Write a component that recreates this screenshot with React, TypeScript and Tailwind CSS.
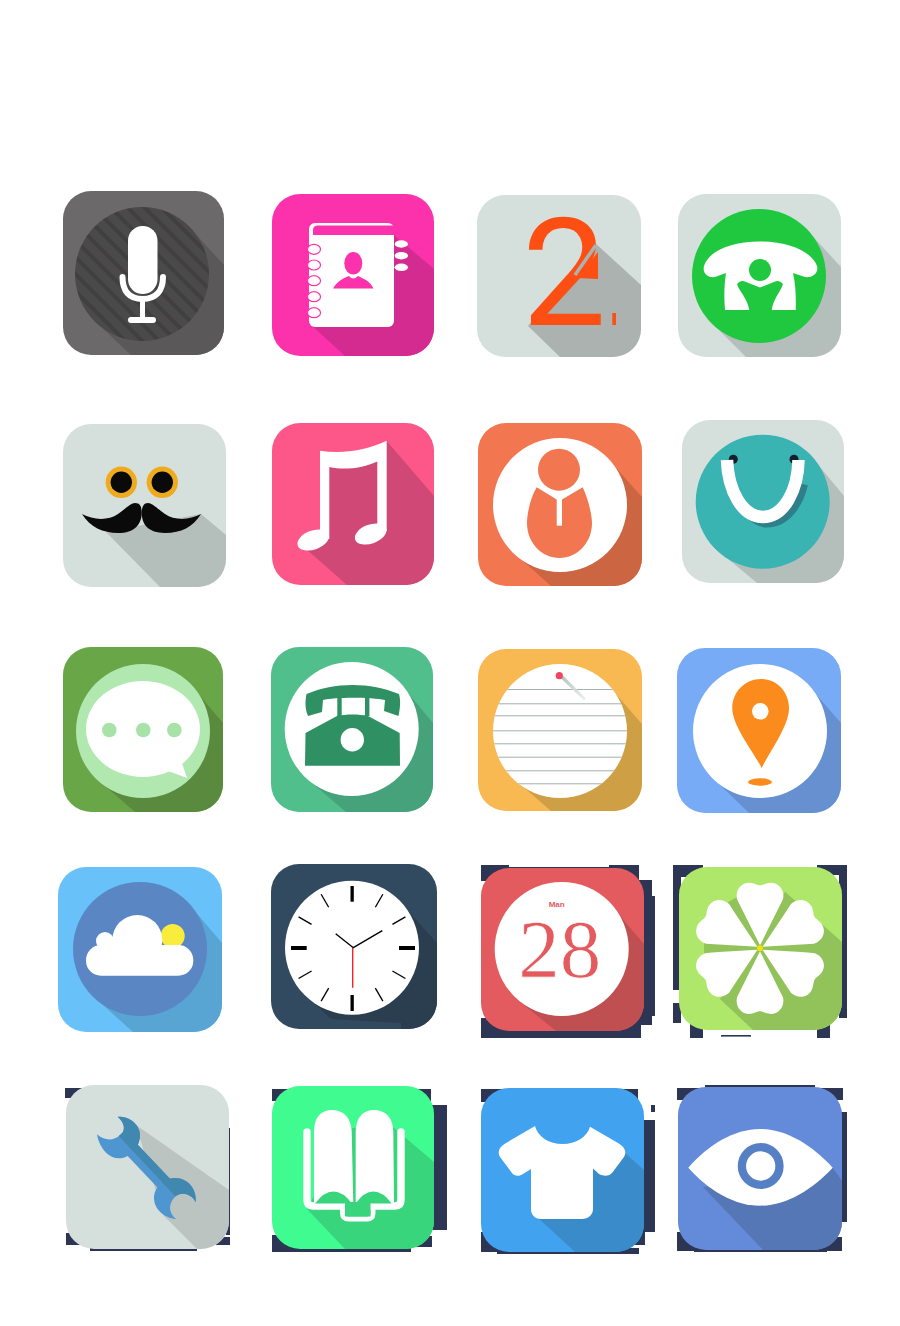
import React from "react";

const NAVY = "#2c3554";
const CHALK = "#d5e0dc";

type Box = [number, number, number, number];

function Tile({
  id,
  w,
  h,
  bg,
  className,
  junk = [],
  children,
}: {
  id: string;
  w: number;
  h: number;
  bg: string;
  className: string;
  junk?: Box[];
  children: React.ReactNode;
}) {
  return (
    <svg viewBox={`0 0 ${w} ${h}`} className={`overflow-visible ${className}`}>
      <defs>
        <clipPath id={id}>
          <rect width={w} height={h} rx={28} />
        </clipPath>
      </defs>
      {/* leftover dark cut-out marks behind some of the tiles */}
      {junk.map(([x, y, bw, bh], i) => (
        <rect key={i} x={x} y={y} width={bw} height={bh} fill={NAVY} />
      ))}
      <g clipPath={`url(#${id})`}>
        <rect width={w} height={h} fill={bg} />
        {children}
      </g>
    </svg>
  );
}

function Mic() {
  return (
    <Tile id="mic" w={161} h={164} bg="#6b6969" className="ml-[5px] w-[161px] h-[164px]">
      <defs>
        <pattern id="micStripes" width="12" height="12" patternUnits="userSpaceOnUse" patternTransform="rotate(45)">
          <rect width="12" height="12" fill="#4b4a4a" />
          <rect width="12" height="4" fill="#413f3f" />
        </pattern>
      </defs>
      <polygon points="126,36 161,74 161,164 68,164 32,130" fill="#5a5858" />
      <circle cx="79" cy="83" r="67" fill="url(#micStripes)" />
      <rect x="65" y="35" width="29.5" height="68" rx="14.7" fill="#fff" />
      <path d="M59.5 86C59.5 100 66 108 79.5 108C93 108 100 100 100 86" fill="none" stroke="#fff" strokeWidth="6" strokeLinecap="round" />
      <path d="M79.5 108V127" stroke="#fff" strokeWidth="5" />
      <rect x="65" y="126" width="28" height="6" rx="3" fill="#fff" />
    </Tile>
  );
}

function Contacts() {
  return (
    <Tile id="contacts" w={162} h={162} bg="#fb32ac" className="ml-px mt-[3px] w-[162px] h-[162px]">
      <polygon points="122,41 162,75 162,162 73,162 37,129" fill="#d42b91" />
      <rect x="37" y="29" width="85" height="104" rx="6" fill="#fff" />
      <path d="M41 41V36Q41 31.5 46 31.5H123V41Z" fill="#fb32ac" />
      {[55.3, 71, 86.7, 102.7, 118.7].map((y) => (
        <ellipse key={y} cx="42" cy={y} rx="6.5" ry="5" fill="#fff" stroke="#fb32ac" strokeWidth="1.2" />
      ))}
      {[50, 61.7, 73.3].map((y) => (
        <ellipse key={y} cx="129.3" cy={y} rx="6.7" ry="3.7" fill="#fff" />
      ))}
      <ellipse cx="81.3" cy="69.3" rx="9" ry="11.3" fill="#fb32ac" />
      <path d="M61 94.5C65 87 72 84 77 82Q81 87 86 82C92 85 98 87 101.5 94.5Z" fill="#fb32ac" />
    </Tile>
  );
}

function Two() {
  return (
    <Tile id="two" w={164} h={162} bg={CHALK} className="mt-[4px] w-[164px] h-[162px]">
      <polygon points="118,48 164,90 164,162 83,162 51,131 114,50" fill="#abb2b0" />
      <text x="45" y="130" fontSize="150" fill="#fd4f14" className="font-['Roboto',sans-serif]">
        2
      </text>
      <polygon points="121,57 121,84 100,83" fill="#fd4f14" />
      <path d="M119 50L98 80" stroke="#abb2b0" strokeWidth="3.5" />
      <rect x="135.3" y="118" width="3.7" height="12" fill="#fd4f14" />
    </Tile>
  );
}

function GreenPhone() {
  return (
    <Tile id="greenPhone" w={163} h={163} bg={CHALK} className="ml-px mt-[3px] w-[163px] h-[163px]">
      <polygon points="128,35 163,73 163,163 68,163 34,129" fill="#b4bebb" />
      <circle cx="81" cy="82" r="67" fill="#1fc83f" />
      <path
        d="M26 72C30 58 52 47.5 82 47.5C112 47.5 134 58 139 72C141 80 133 84 127 83L115 79C118 92 118 105 117.7 116L47 116C46 105 46 92 48 79L37 83C31 84 24 80 26 72Z"
        fill="#fff"
      />
      <circle cx="82" cy="76" r="11" fill="#1fc83f" />
      <path
        d="M59 90Q63 85 68 88L82 93.5L96 88Q101 85 105 90C103 97 95 105 93.7 116.5L71.3 116.5C70 105 61 97 59 90Z"
        fill="#1fc83f"
      />
    </Tile>
  );
}

function Mustache() {
  return (
    <Tile id="mustache" w={163} h={163} bg={CHALK} className="ml-[5px] mt-[4px] w-[163px] h-[163px]">
      <polygon points="138,90 163,111 163,163 97,163 43,108" fill="#b4bebb" />
      {[58.3, 99.3].map((x) => (
        <g key={x}>
          <circle cx={x} cy="58.3" r="15.7" fill="#eeab1e" />
          <circle cx={x} cy="58.3" r="10.7" fill="#0a0a0a" />
        </g>
      ))}
      <path d="M19 90C30 96 45 97 55 90C62 85 68 79 72 79C78 79 78.5 84 78.7 88C79 100 72 109 55 109C40 109 27 103 19 90Z" fill="#0a0a0a" />
      <path d="M138 90C127 96 112 97 102 90C95 85 89 79 85 79C80 79 79 84 78.7 88C78.5 100 85 109 102 109C118 109 130 103 138 90Z" fill="#0a0a0a" />
    </Tile>
  );
}

function Music() {
  return (
    <Tile id="music" w={162} h={162} bg="#fd5789" className="ml-px mt-[3px] w-[162px] h-[162px]">
      <polygon points="52,40 100,30 114.7,18 162,73 162,162 75,162 33,125 52,112" fill="#d04875" />
      <path d="M48 27.7C70 31 92 28 114.7 17.7V108H105.3V38.5C88 46 72 47 57.3 44V116H48Z" fill="#fff" />
      <ellipse cx="41.3" cy="117" rx="16.5" ry="9.5" transform="rotate(-20 41.3 117)" fill="#fff" />
      <ellipse cx="98.7" cy="111" rx="16.5" ry="9.5" transform="rotate(-20 98.7 111)" fill="#fff" />
    </Tile>
  );
}

function Baby() {
  return (
    <Tile id="baby" w={164} h={163} bg="#f27650" className="ml-px mt-[3px] w-[164px] h-[163px]">
      <polygon points="129,35 164,74 164,163 73,163 35,129" fill="#cc6541" />
      <circle cx="82" cy="82" r="67" fill="#fff" />
      <circle cx="81" cy="46.7" r="21" fill="#f27650" />
      <path
        d="M58.7 64.3C52 75 49 92 49 100C49 120 64 135 81.5 135C99 135 114 120 114 100C114 92 110 75 104.7 64.3L84 76.5H78.7Z"
        fill="#f27650"
      />
      <rect x="78.7" y="75" width="5.3" height="27.7" fill="#fff" />
    </Tile>
  );
}

function Bag() {
  return (
    <Tile id="bag" w={162} h={163} bg={CHALK} className="ml-[5px] w-[162px] h-[163px]">
      <polygon points="128,35 162,76 162,163 75,163 33,128" fill="#b4bebb" />
      <circle cx="80.7" cy="81.7" r="67" fill="#3ab3b3" />
      <path d="M68 92C73 98 79 101.5 85 101.5C104 101.5 116 82 120 64" fill="none" stroke="#2f7f8a" strokeWidth="12" />
      <circle cx="51.3" cy="39.3" r="4.5" fill="#12202c" />
      <circle cx="112" cy="39.3" r="4.5" fill="#12202c" />
      <path d="M45 40C46 70 60 97 81 97C102 97 116 70 116.5 40" fill="none" stroke="#fff" strokeWidth="12.5" />
    </Tile>
  );
}

function Message() {
  return (
    <Tile id="message" w={160} h={165} bg="#68a648" className="ml-[5px] w-[160px] h-[165px]">
      <polygon points="127,37 160,76 160,165 72,165 33,131" fill="#5a8a3e" />
      <circle cx="80" cy="84" r="67" fill="#b0e8b0" />
      <ellipse cx="80" cy="82" rx="57" ry="48" fill="#fff" />
      <path d="M105 124L124 131L119 116Z" fill="#fff" />
      {[46.3, 80.3, 111.3].map((x) => (
        <circle key={x} cx={x} cy="83" r="7.3" fill="#a9e2a9" />
      ))}
    </Tile>
  );
}

function DeskPhone() {
  const ink = "#2f9063";
  return (
    <Tile id="deskPhone" w={162} h={165} bg="#50bf8b" className="w-[162px] h-[165px]">
      <polygon points="128,35 162,76 162,165 75,165 33,129" fill="#46a27a" />
      <circle cx="80.7" cy="82" r="67" fill="#fff" />
      <path
        d="M35.5 47C50 41 65 38 81.7 38C98 38 113 41 128 47C130 54 129 62 127.5 69L113 64L114 53C100 50 63 50 52 53L51 65L37 69C34 62 34 54 35.5 47Z"
        fill={ink}
      />
      <rect x="66.3" y="50" width="4.4" height="19" fill={ink} />
      <rect x="94" y="50" width="4.4" height="19" fill={ink} />
      <path d="M34 118.7L34.5 86L66 69C75 67 88 67 97 69L128.7 86L129 118.7Z" fill={ink} />
      <circle cx="81.3" cy="92.7" r="11.7" fill="#fff" />
    </Tile>
  );
}

function Notes() {
  return (
    <Tile id="notes" w={164} h={162} bg="#f8b952" className="ml-px mt-[2px] w-[164px] h-[162px]">
      <defs>
        <clipPath id="notesDisc">
          <circle cx="82" cy="82" r="67" />
        </clipPath>
        <linearGradient id="pinShade" x1="0" y1="0" x2="1" y2="1">
          <stop offset="0" stopColor="#b4c2bd" />
          <stop offset="1" stopColor="#eef1f0" />
        </linearGradient>
      </defs>
      <polygon points="129,35 164,75 164,162 73,162 35,129" fill="#cf9f46" />
      <circle cx="82" cy="82" r="67" fill="#fff" />
      <g clipPath="url(#notesDisc)">
        {[40, 54.3, 66.3, 81.3, 94.3, 107.7, 121.3, 134.3].map((y) => (
          <rect key={y} x="10" y={y} width="144" height="1" fill="#a4b0ac" />
        ))}
      </g>
      <polygon points="82.5,29 85,26.5 108,49.5 106,51.5" fill="url(#pinShade)" />
      <circle cx="81.3" cy="26.7" r="3.6" fill="#f0455f" />
    </Tile>
  );
}

function MapPin() {
  return (
    <Tile id="mapPin" w={164} h={165} bg="#77abf5" className="mt-px w-[164px] h-[165px]">
      <polygon points="130,36 164,75 164,165 72,165 36,130" fill="#6690d0" />
      <circle cx="83" cy="83" r="67" fill="#fff" />
      <path d="M84 31C100 31 112 44 112 60C112 78 93 103 84.7 120C76 103 55.3 78 55.3 60C55.3 44 68 31 84 31Z" fill="#fb8b1c" />
      <circle cx="83.3" cy="63.3" r="8.3" fill="#fff" />
      <ellipse cx="83" cy="134" rx="12" ry="3.7" fill="#fb8b1c" />
    </Tile>
  );
}

function Weather() {
  return (
    <Tile id="weather" w={164} h={165} bg="#68c1f9" className="mt-[3px] w-[164px] h-[165px]">
      <polygon points="129,35 164,76 164,165 75,165 35,129" fill="#58a4d2" />
      <circle cx="82" cy="82" r="67" fill="#5a86c4" />
      <circle cx="114.7" cy="69" r="12" fill="#f9ec3d" />
      <circle cx="79.3" cy="73" r="25" fill="#fff" />
      <circle cx="47" cy="74" r="9" fill="#fff" />
      <rect x="28" y="78" width="107.3" height="30.7" rx="15" fill="#fff" />
    </Tile>
  );
}

function Clock() {
  const cx = 81;
  const cy = 83.7;
  return (
    <Tile id="clock" w={166} h={165} bg="#314a5f" className="w-[166px] h-[165px]">
      <polygon points="128,37 166,79 166,165 130,165 130,159 60,155 34,131" fill="#2b3e50" />
      <circle cx={cx} cy={cy} r="67" fill="#fff" />
      <rect x="79.5" y="22" width="3.3" height="15.7" fill="#000" />
      <rect x="79.5" y="131" width="3.3" height="16" fill="#000" />
      <rect x="128" y="82" width="16" height="4" fill="#000" />
      <rect x="20" y="82" width="15.7" height="4" fill="#000" />
      {[30, 60, 120, 150, 210, 240, 300, 330].map((deg) => {
        const a = (deg * Math.PI) / 180;
        return (
          <line
            key={deg}
            x1={cx + 46.7 * Math.sin(a)}
            y1={cy - 46.7 * Math.cos(a)}
            x2={cx + 61.7 * Math.sin(a)}
            y2={cy - 61.7 * Math.cos(a)}
            stroke="#000"
            strokeWidth="1.3"
          />
        );
      })}
      <path d="M111.3 66.7L82.3 83.7L64.7 69.7" fill="none" stroke="#000" strokeWidth="1.4" />
      <path d="M81.7 84V123.7" stroke="#f5222d" strokeWidth="1.4" />
    </Tile>
  );
}

function Calendar() {
  return (
    <Tile
      id="calendar"
      w={163}
      h={163}
      bg="#e35b5e"
      className="ml-[4px] mt-[4px] w-[163px] h-[163px]"
      junk={[
        [0, -1, 158, 14],
        [0, -3, 28, 3],
        [128, -3, 30, 3],
        [156, 12, 15, 145],
        [168, 28, 6, 120],
        [0, 150, 160, 20],
        [165, 150, 4, 3],
      ]}
    >
      <polygon points="128,35 163,76 163,163 75,163 33,129" fill="#c04f52" />
      <circle cx="80.7" cy="81" r="67" fill="#fff" />
      <text x="75.7" y="38.5" fontSize="8" fontWeight="700" textAnchor="middle" fill="#e35b5e" className="font-['Liberation_Sans',sans-serif]">
        Man
      </text>
      <text x="78.7" y="108.7" fontSize="83" textAnchor="middle" fill="#e35b5e" stroke="#fff" strokeWidth="0.7" className="font-['Liberation_Serif',serif]">
        28
      </text>
    </Tile>
  );
}

const PETAL =
  "M0 -3C-7.7 -18 -15.3 -34 -23 -49C-25 -58 -19 -65.6 -11 -65.6C-6 -65.6 -3 -63 0 -63C3 -63 6 -65.6 11 -65.6C19 -65.6 25 -58 23 -49C15.3 -34 7.7 -18 0 -3Z";

function Clover() {
  return (
    <Tile
      id="clover"
      w={163}
      h={163}
      bg="#afe76a"
      className="ml-[2px] mt-[3px] w-[163px] h-[163px]"
      junk={[
        [-6, -2, 30, 12],
        [-6, -2, 8, 125],
        [138, -2, 30, 10],
        [160, 4, 8, 147],
        [-6, 136, 8, 20],
        [11, 150, 13, 21],
        [138, 150, 13, 21],
        [42, 168, 30, 1.6],
      ]}
    >
      <polygon points="106,24.7 163,75 163,163 74,163 41,132" fill="#92c25a" />
      <circle cx="81" cy="81.3" r="56" fill="#92c25a" />
      <g transform="translate(81 81.3)">
        {[0, 60, 120, 180, 240, 300].map((deg) => (
          <path key={deg} d={PETAL} fill="#fff" transform={`rotate(${deg})`} />
        ))}
        <circle r="3" fill="#f5e000" />
      </g>
    </Tile>
  );
}

function Wrench() {
  const parts = (
    <>
      <path d="M51.7 31.7C59 38 60 46 54 50C48 56 38 56 31 49.3C33 62 42 73 52 73.3C64 74 74 62 74 50C74 40 64 31 51.7 31.7Z" />
      <path d="M64 62.5L100 100.5" strokeWidth="15" />
      <path d="M129.7 117.3C125 108 114 106 108 113C102 120 103 128 110 134C98 133 88 124 88 113C88 102 98 93 109 93C122 93 131 104 129.7 117.3Z" />
    </>
  );
  return (
    <Tile
      id="wrench"
      w={163}
      h={164}
      bg={CHALK}
      className="ml-[8px] w-[163px] h-[164px]"
      junk={[
        [-1, 3, 18, 10],
        [24, 160, 107, 6],
        [160, 43, 4, 107],
        [150, 152, 14, 8],
        [0, 148, 14, 12],
      ]}
    >
      <defs>
        <clipPath id="wrenchHalf">
          <polygon points="20,16 140,144 163,144 163,0 20,0" />
        </clipPath>
      </defs>
      <polygon points="70,40 163,105 163,164 131,164 97,130" fill="#bcc4c2" />
      <g fill="#4f96d0" stroke="#4f96d0" strokeWidth="0">
        {parts}
      </g>
      <g fill="#4188b0" stroke="#4188b0" strokeWidth="0" clipPath="url(#wrenchHalf)">
        {parts}
      </g>
    </Tile>
  );
}

function Book() {
  return (
    <Tile
      id="book"
      w={162}
      h={163}
      bg="#3ffb90"
      className="ml-px mt-px w-[162px] h-[163px]"
      junk={[
        [0, 3, 26, 12],
        [133, 3, 26, 12],
        [155, 19, 20, 125],
        [0, 149, 20, 17],
        [15, 160, 124, 6],
        [130, 150, 30, 11],
      ]}
    >
      <polygon points="79,42 122,42 162,76 162,163 73,163 35,123" fill="#38d57d" />
      <path
        d="M35 46V114Q35 120 41 120H123Q129 120 129 114V46"
        fill="none"
        stroke="#fff"
        strokeWidth="7.4"
        strokeLinecap="round"
      />
      <path d="M70.5 120V127Q70.5 133 77 133H95Q101 133 101 127V120" fill="none" stroke="#fff" strokeWidth="5" />
      <path d="M42 46C42 30 50 24 60 24C70 24 79 30 79.7 46L81.3 118H42Z" fill="#fff" />
      <path d="M83.7 46C84 30 92 24 102 24C112 24 121 30 121.3 46L122 118H83.7Z" fill="#fff" />
      <path d="M43 117.5Q52 105.5 61.3 105.5Q71 105.5 80 117.5Z" fill="#38d57d" />
      <path d="M83.7 117.5Q92 105.5 101.3 105.5Q111 105.5 119.7 117.5Z" fill="#38d57d" />
      <rect x="73" y="116" width="25.5" height="14.5" fill="#38d57d" />
    </Tile>
  );
}

function Shirt() {
  return (
    <Tile
      id="shirt"
      w={163}
      h={164}
      bg="#41a2ef"
      className="ml-[4px] mt-[3px] w-[163px] h-[164px]"
      junk={[
        [0, 1, 30, 13],
        [129, 1, 28, 10],
        [158, 32, 16, 112],
        [170, 17, 4, 7],
        [16, 160, 142, 6],
        [0, 144, 16, 20],
        [150, 144, 14, 13],
      ]}
    >
      <polygon points="144,65 163,82 163,164 94,164 55,128 112,80" fill="#3a8bca" />
      <path
        d="M54 38C57 49 68 56 81.7 56C95 56 106 49 109 38.7L137 55C144 59 146 64 143 69L131 85C127 89 122 88 118 86L112 80.5V121C112 127 107 131 101 131H60C54 131 50 127 50 121V81L42 86C38 89 33 88 31 85L19 69C16 64 18 59 25 55Z"
        fill="#fff"
      />
    </Tile>
  );
}

function Eye() {
  return (
    <Tile
      id="eye"
      w={164}
      h={163}
      bg="#648bd9"
      className="ml-px mt-[2px] w-[164px] h-[163px]"
      junk={[
        [-1, 1, 28, 12],
        [27, -2, 110, 4],
        [139, 1, 26, 12],
        [160, 25, 9, 110],
        [16, 160, 133, 5],
        [-1, 145, 18, 19],
        [146, 150, 18, 14],
      ]}
    >
      <polygon points="154.7,80.7 164,94 164,163 85,163 25,100" fill="#5677b5" />
      <path d="M10.3 80.7C30 58 56 42 82 42C108 42 134 58 154.7 80.7C134 103 108 118.7 82 118.7C56 118.7 30 103 10.3 80.7Z" fill="#fff" />
      <circle cx="82.7" cy="79" r="18.8" fill="none" stroke="#5680c4" strokeWidth="8.3" />
    </Tile>
  );
}

export default function App() {
  return (
    <div className="w-[900px] h-[1326px] bg-white pt-[191px] pl-[58px] overflow-hidden">
      <div className="grid grid-cols-[213px_206px_200px_223px] grid-rows-[229px_227px_217px_221px_241px] items-start justify-items-start">
        <Mic />
        <Contacts />
        <Two />
        <GreenPhone />

        <Mustache />
        <Music />
        <Baby />
        <Bag />

        <Message />
        <DeskPhone />
        <Notes />
        <MapPin />

        <Weather />
        <Clock />
        <Calendar />
        <Clover />

        <Wrench />
        <Book />
        <Shirt />
        <Eye />
      </div>
    </div>
  );
}
